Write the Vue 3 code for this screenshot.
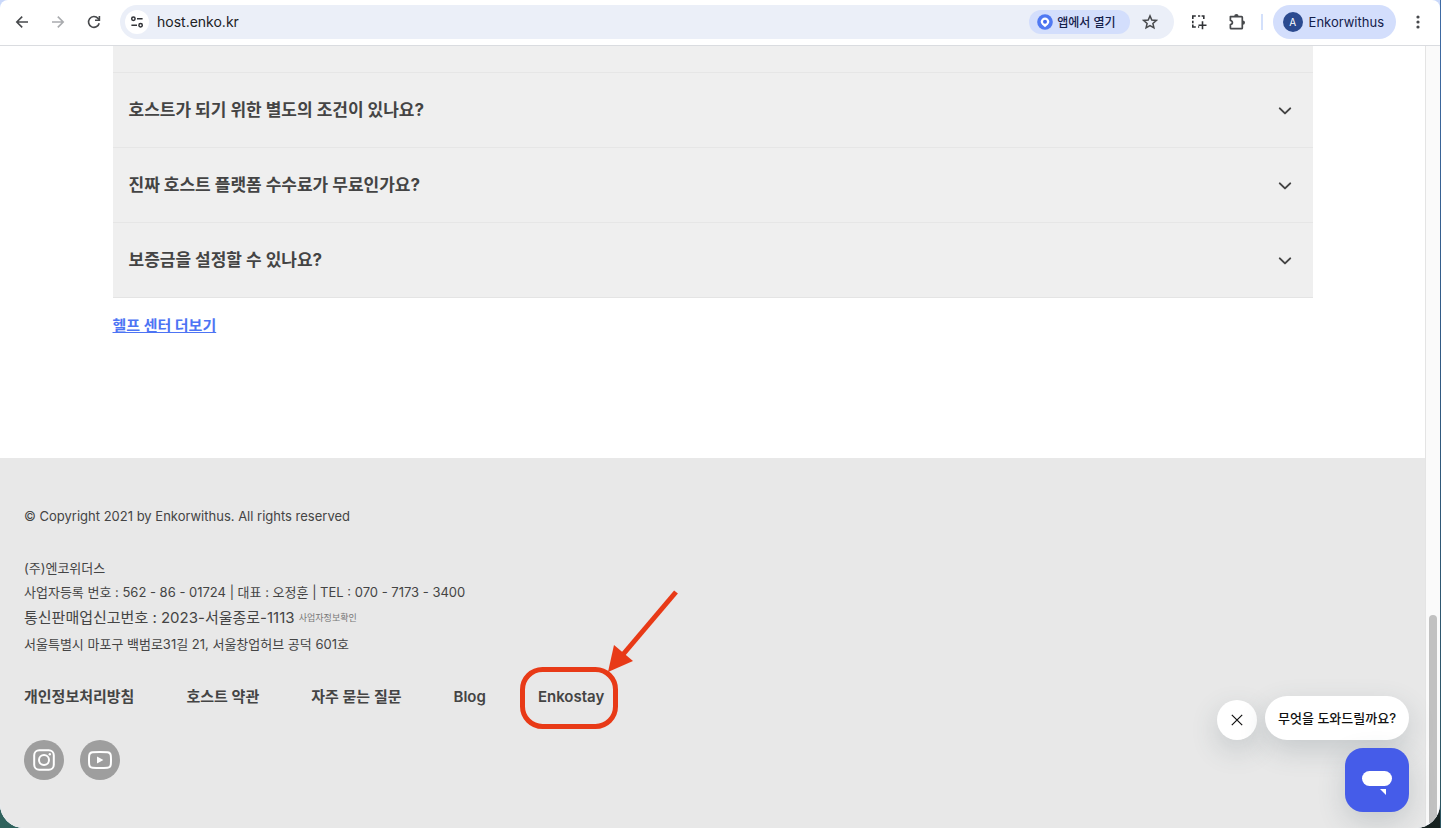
<template>
  <div class="desktop">
    <div class="window">
      <header class="toolbar">
        <button class="icon-btn" type="button" aria-label="뒤로">
          <svg width="16" height="16" viewBox="0 0 16 16" fill="none" stroke="#47494c" stroke-width="1.6">
            <path d="M14 8H3M8.2 2.6L2.8 8l5.4 5.4" />
          </svg>
        </button>
        <button class="icon-btn" type="button" aria-label="앞으로" disabled>
          <svg width="16" height="16" viewBox="0 0 16 16" fill="none" stroke="#a9abae" stroke-width="1.6">
            <path d="M2 8h11M7.8 2.6L13.2 8l-5.4 5.4" />
          </svg>
        </button>
        <button class="icon-btn" type="button" aria-label="새로고침">
          <svg width="16" height="16" viewBox="0 0 16 16" fill="none" stroke="#47494c" stroke-width="1.6">
            <path d="M13.2 9.2A5.4 5.4 0 1 1 12 4.4l1.3 1.4" />
            <path d="M13.4 2v4.3H9" />
          </svg>
        </button>

        <div class="address">
          <button class="site-btn" type="button" aria-label="사이트 정보">
            <svg width="14" height="14" viewBox="0 0 14 14" fill="none" stroke="#303236" stroke-width="1.5">
              <circle cx="3.4" cy="3.8" r="1.7" />
              <path d="M7 3.8h5.6M1.4 10.2H7" />
              <circle cx="10.6" cy="10.2" r="1.7" />
            </svg>
          </button>
          <input v-model="url" class="url" type="text" aria-label="주소창" spellcheck="false" />
          <button class="app-btn" type="button">
            <svg width="16" height="16" viewBox="0 0 16 16">
              <circle cx="8" cy="8" r="7.8" fill="#5079f2" />
              <path d="M8 13.2L5 10.6a4.1 4.1 0 1 1 6 0z" fill="#fff" />
              <circle cx="8" cy="7.8" r="2" fill="#4169ee" />
            </svg>
            앱에서 열기
          </button>
          <button class="icon-btn" type="button" aria-label="북마크">
            <svg width="16" height="16" viewBox="0 0 16 16" fill="none" stroke="#47494c" stroke-width="1.5">
              <path d="M8 1.9l1.8 4.1 4.5.4-3.4 3 1 4.4L8 11.5l-3.9 2.3 1-4.4-3.4-3 4.5-.4z" />
            </svg>
          </button>
        </div>

        <div class="tools">
          <button class="icon-btn" type="button" aria-label="화면 캡처">
            <svg width="16" height="16" viewBox="0 0 16 16" fill="none" stroke="#303236" stroke-width="1.6">
              <path d="M1.8 5V2h3M7 2h2.2M10.600 2h2.200v3M1.8 6.800v2.400M1.8 10.500V13h3M7 13h1.200M11.500 7.200v8M7.500 11.200h8" />
            </svg>
          </button>
          <button class="icon-btn" type="button" aria-label="확장 프로그램">
            <svg width="18" height="18" viewBox="0 0 18 18" fill="none" stroke="#47494c" stroke-width="1.7">
              <path d="M2.4 3.600h11.200q.7 0 .7.7v10.600q0 .7-.7.7H3.100q-.7 0-.7-.7v-3.200q2-.3 2-2.100t-2-2.100z" stroke-linejoin="round" />
              <path d="M6.200 3.200a2.200 2.200 0 0 1 4.400 0zM14.800 7.400a2.200 2.200 0 0 1 0 4.400z" fill="#47494c" stroke="none" />
            </svg>
          </button>
          <span class="divider"></span>
        </div>

        <button class="profile" type="button">
          <span class="avatar">A</span>
          Enkorwithus
        </button>
        <button class="icon-btn" type="button" aria-label="메뉴">
          <svg width="4" height="16" viewBox="0 0 4 16" fill="#47494c">
            <circle cx="2" cy="3" r="1.6" />
            <circle cx="2" cy="8" r="1.6" />
            <circle cx="2" cy="13" r="1.6" />
          </svg>
        </button>
      </header>

      <div class="viewport">
        <div class="page">
          <main class="content">
            <div class="faq">
              <button v-for="q in questions" :key="q" class="faq-item" type="button" aria-expanded="false">
                {{ q }}
                <svg width="14" height="16" viewBox="0 0 14 16" fill="none" stroke="#444" stroke-width="2">
                  <path d="M1.8 8.400L7 13.400l5.200-5" stroke-linecap="round" stroke-linejoin="round" />
                </svg>
              </button>
            </div>
            <a class="help-link" href="#">헬프 센터 더보기</a>
          </main>

          <footer class="footer">
            <p class="copyright">© Copyright 2021 by Enkorwithus. All rights reserved</p>
            <address class="company">
              <p>(주)엔코위더스</p>
              <p>사업자등록 번호 : 562 - 86 - 01724 | 대표 : 오정훈 | TEL : 070 - 7173 - 3400</p>
              <p class="license">통신판매업신고번호 : 2023-서울종로-1113 <a href="#">사업자정보확인</a></p>
              <p>서울특별시 마포구 백범로31길 21, 서울창업허브 공덕 601호</p>
            </address>
            <nav class="links">
              <a v-for="link in links" :key="link" href="#">{{ link }}</a>
              <a class="marked" href="#">
                Enkostay
                <svg class="marker" width="160" height="140" viewBox="0 0 160 140">
                  <rect x="2.5" y="79.5" width="93" height="57" rx="20" fill="none" stroke="#e83a17" stroke-width="5" />
                  <path d="M156 2L100 68" stroke="#e83a17" stroke-width="5" />
                  <path d="M88 82l6-27 19 16z" fill="#e83a17" />
                </svg>
              </a>
            </nav>
            <div class="social">
              <a href="#" aria-label="Instagram">
                <svg width="40" height="40" viewBox="0 0 40 40" fill="none" stroke="#fff" stroke-width="2">
                  <rect x="10.2" y="10.2" width="19.6" height="19.6" rx="5" />
                  <circle cx="20" cy="20" r="5" />
                  <circle cx="25.8" cy="14.2" r="1.2" fill="#fff" stroke="none" />
                </svg>
              </a>
              <a href="#" aria-label="YouTube">
                <svg width="40" height="40" viewBox="0 0 40 40" fill="none" stroke="#fff" stroke-width="2">
                  <path d="M12.5 12.3q7.5-.6 15 0 3 .2 3.3 3.2.4 4.5 0 9-.3 3-3.3 3.200-7.500.6-15 0-3-.2-3.300-3.200-.4-4.500 0-9 .3-3 3.300-3.200z" />
                  <path d="M17 16.600v6.800l6.400-3.400z" fill="#fff" stroke="none" />
                </svg>
              </a>
            </div>
          </footer>
        </div>

        <div class="scrollbar" aria-hidden="true">
          <div class="thumb"></div>
        </div>

        <div class="chat">
          <div class="chat-row">
            <button class="chat-close" type="button" aria-label="닫기">
              <svg width="12" height="12" viewBox="0 0 12 12" stroke="#111" stroke-width="1.2">
                <path d="M.8.8l10.400 10.400M11.200.8L.8 11.200" />
              </svg>
            </button>
            <button class="chat-bubble" type="button">무엇을 도와드릴까요?</button>
          </div>
          <button class="chat-launcher" type="button" aria-label="채팅 열기">
            <svg width="32" height="32" viewBox="0 0 32 32" fill="#fff">
              <rect x="1" y="7" width="30" height="15" rx="7.5" />
              <path d="M19 25h6v6z" />
            </svg>
          </button>
        </div>
      </div>
    </div>
  </div>
</template>

<script setup>
import { ref } from 'vue'

const url = ref('host.enko.kr')

const questions = [
  '호스트가 되기 위한 별도의 조건이 있나요?',
  '진짜 호스트 플랫폼 수수료가 무료인가요?',
  '보증금을 설정할 수 있나요?'
]

const links = ['개인정보처리방침', '호스트 약관', '자주 묻는 질문', 'Blog']
</script>

<style>
body {
  margin: 0;
  background: #fff;
}
</style>

<style scoped>
.desktop {
  box-sizing: border-box;
  min-height: 100vh;
  padding: 0 1px 4px 0;
  display: flex;
  background: linear-gradient(to right, #2f625c, #16211f) content-box,
    linear-gradient(to top, #fff 4px, #2c5560 4px, #315a86 60%, #3f6ba5) border-box;
  font-family: Inter, "Noto Sans CJK KR", sans-serif;
  color: #444;
}

.window {
  flex: 1;
  min-width: 0;
  display: flex;
  flex-direction: column;
  overflow: hidden;
  border-radius: 0 0 24px 24px;
  background: #c9d8fa;
}

button {
  padding: 0;
  border: 0;
  background: none;
  font: inherit;
  color: inherit;
  cursor: pointer;
}

p {
  margin: 0;
}

.toolbar {
  display: flex;
  align-items: center;
  box-sizing: border-box;
  height: 46px;
  padding: 0 8px 2px;
  border-bottom: 1px solid #dadce0;
  border-radius: 8px 8px 0 0;
  background: #fff;
}

.icon-btn {
  display: flex;
  align-items: center;
  justify-content: center;
  flex-shrink: 0;
  width: 28px;
  height: 28px;
}

.toolbar > .icon-btn + .icon-btn {
  margin-left: 8px;
}

.address {
  flex: 1;
  display: flex;
  align-items: center;
  box-sizing: border-box;
  min-width: 0;
  height: 34px;
  margin: 0 11px 0 12px;
  padding: 0 10px 0 5px;
  border-radius: 17px;
  background: #ebeff8;
}

.site-btn {
  display: flex;
  align-items: center;
  justify-content: center;
  width: 24px;
  height: 24px;
  border-radius: 50%;
  background: #fff;
}

.url {
  flex: 1;
  min-width: 0;
  padding: 0 8px;
  border: 0;
  outline: 0;
  background: none;
  font: 14px/20px Inter, sans-serif;
  color: #202124;
}

.app-btn {
  display: flex;
  align-items: center;
  gap: 4px;
  height: 24px;
  margin-right: 6px;
  padding: 0 14px 0 8px;
  border-radius: 12px;
  background: #d3defc;
  font-size: 12px;
  font-weight: 500;
  color: #14204a;
}

.tools {
  display: flex;
  align-items: center;
  gap: 10px;
}

.divider {
  width: 2px;
  height: 16px;
  background: #d3e0fb;
}

.profile {
  display: flex;
  align-items: center;
  gap: 6px;
  height: 34px;
  margin: 0 8px 0 10px;
  padding: 0 12px 0 10px;
  border-radius: 17px;
  background: #d3defc;
  font-size: 13px;
  color: #14204a;
}

.avatar {
  width: 20px;
  height: 20px;
  border-radius: 50%;
  background: #2b4a8f;
  font-size: 10px;
  line-height: 20px;
  text-align: center;
  color: #fff;
}

.viewport {
  flex: 1;
  position: relative;
  display: flex;
}

.page {
  flex: 1;
  min-width: 0;
  display: flex;
  flex-direction: column;
  background: #fff;
}

.content {
  flex: 1;
  width: 100%;
  max-width: 1200px;
  margin: 0 auto;
}

/* the top padding is the tail of the item scrolled out above */
.faq {
  padding-top: 26px;
  border-bottom: 1px solid #e4e4e4;
  background: #efefef;
}

.faq-item {
  display: flex;
  align-items: center;
  justify-content: space-between;
  width: 100%;
  height: 75px;
  padding: 0 21px 4px 16px;
  border-top: 1px solid #e6e6e6;
  font-size: 17px;
  font-weight: 700;
  text-align: left;
}

.help-link {
  display: inline-block;
  margin: 16px 0 48px;
  font-size: 15px;
  line-height: 24px;
  font-weight: 700;
  color: #4d74f4;
}

.footer {
  padding: 48px 24px;
  background: #e8e8e8;
}

.copyright {
  font-size: 13px;
  line-height: 20px;
}

.company {
  margin: 30px 0 29px;
  font-size: 13px;
  line-height: 24px;
  font-style: normal;
}

.license {
  font-size: 15px;
  line-height: 28px;
}

.license a {
  font-size: 9px;
  color: #777;
  text-decoration: none;
  vertical-align: 2px;
}

.links {
  display: flex;
  gap: 52px;
  font-size: 15px;
  line-height: 24px;
  font-weight: 600;
}

.links a {
  color: #444;
  text-decoration: none;
}

.marked {
  position: relative;
}

.marker {
  position: absolute;
  left: -18px;
  top: -95px;
  pointer-events: none;
}

.social {
  display: flex;
  gap: 16px;
  margin-top: 31px;
}

.social a {
  width: 40px;
  height: 40px;
  border-radius: 50%;
  background: #9e9e9e;
}

.scrollbar {
  display: flex;
  flex-direction: column;
  justify-content: flex-end;
  width: 8px;
  padding: 3px;
  border-left: 1px solid #e4e4e4;
  background: #fafafa;
}

.thumb {
  height: 27%;
  border-radius: 4px;
  background: #c1c1c1;
}

.chat {
  position: absolute;
  right: 31px;
  bottom: 16px;
  display: flex;
  flex-direction: column;
  align-items: flex-end;
  gap: 8px;
}

.chat-row {
  display: flex;
  align-items: flex-end;
  gap: 8px;
}

.chat-close,
.chat-bubble,
.chat-launcher {
  display: flex;
  align-items: center;
  justify-content: center;
  background: #fff;
  box-shadow: 0 10px 28px rgba(60, 80, 90, 0.2);
}

.chat-close {
  width: 40px;
  height: 40px;
  border-radius: 50%;
}

.chat-bubble {
  height: 44px;
  padding: 0 13px 2px;
  border-radius: 22px;
  font-size: 13px;
  font-weight: 500;
  color: #111;
}

.chat-launcher {
  width: 64px;
  height: 64px;
  border-radius: 18px;
  background: #455ce9;
}
</style>
